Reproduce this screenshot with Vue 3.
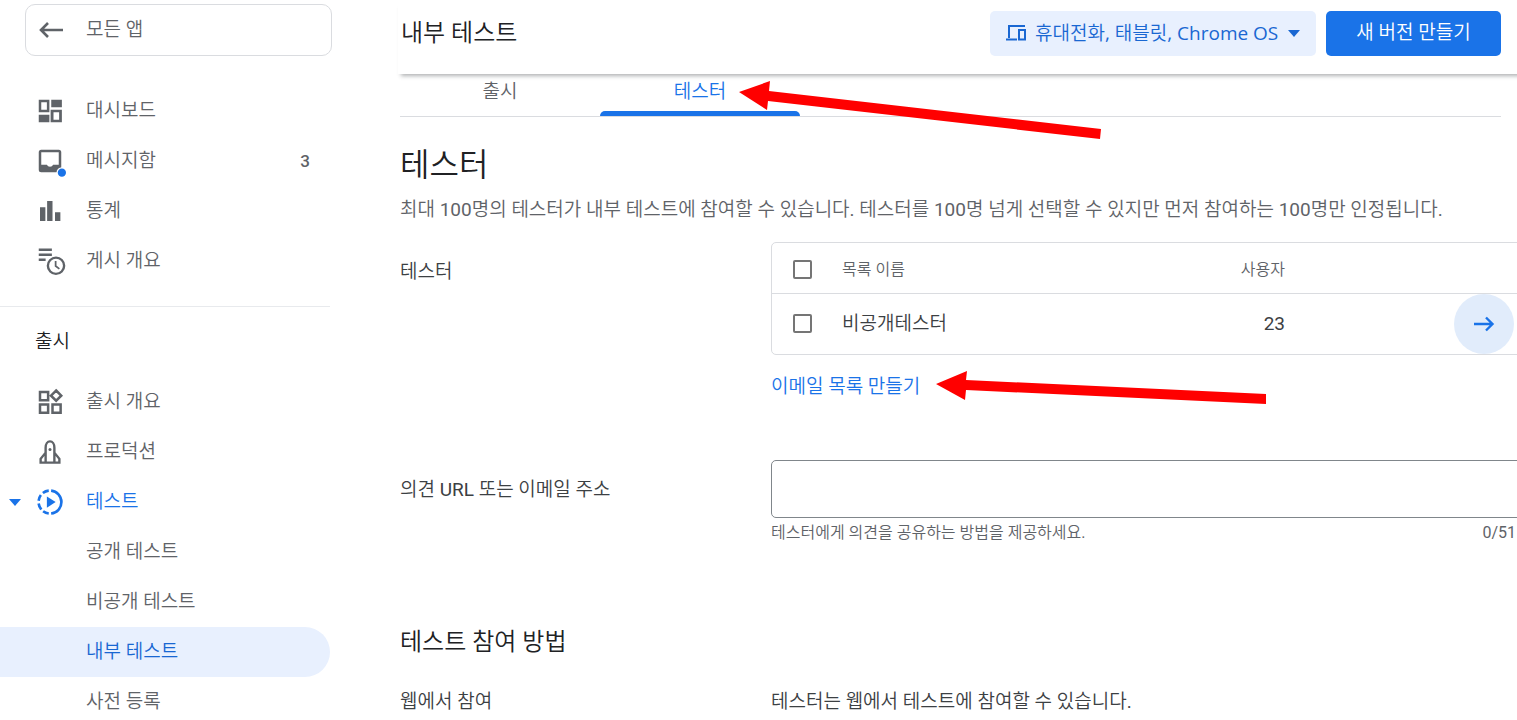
<script setup>
import { ref } from "vue";

const overviewItems = [
  { label: "대시보드", icon: "dashboard" },
  { label: "메시지함", icon: "inbox", count: 3 },
  { label: "통계", icon: "stats" },
  { label: "게시 개요", icon: "publishing" },
]

const releaseItems = [
  { label: "출시 개요", icon: "releases" },
  { label: "프로덕션", icon: "rocket" },
  { label: "테스트", icon: "testing", open: true },
  { label: "공개 테스트" },
  { label: "비공개 테스트" },
  { label: "내부 테스트", active: true },
  { label: "사전 등록" },
]

const groups = [
  { items: overviewItems },
  { title: "출시", items: releaseItems },
]

const tabs = ["출시", "테스터"]
const currentTab = ref("테스터")

const lists = ref([{ id: 1, name: "비공개테스터", users: 23, checked: false }])
const allChecked = ref(false)
const feedback = ref("")

const toggleAll = () => {
  lists.value.forEach((list) => (list.checked = allChecked.value))
}
</script>

<template>
  <div class="page">
    <aside class="sidebar">
      <a href="#" class="back">
        <svg width="30" height="30" viewBox="0 0 30 30">
          <path d="M27 15H5M12 8l-7 7 7 7" fill="none" stroke="currentColor" stroke-width="2.6" />
        </svg>
        <span>모든 앱</span>
      </a>

      <nav v-for="(group, i) in groups" :key="i" class="group">
        <h2 v-if="group.title">{{ group.title }}</h2>
        <a
          v-for="item in group.items"
          :key="item.label"
          href="#"
          class="item"
          :class="{ active: item.active, open: item.open }"
        >
          <span class="caret">
            <svg v-if="item.open" width="12" height="7" viewBox="0 0 12 7"><path d="M0 0h12L6 7z" fill="currentColor" /></svg>
          </span>
          <span class="icon">
            <svg v-if="item.icon" width="30" height="30" viewBox="0 0 24 24" fill="currentColor">
              <path v-if="item.icon === 'dashboard'" fill-rule="evenodd" d="M3 3h8.500v10H3zM5 5v6h4.500V5zM13 3h8.500v6H13zM12.500 11h9v10h-9zM14.800 13v6h4.500v-6zM3 15h8.500v6H3z" />
              <g v-else-if="item.icon === 'inbox'">
                <path fill-rule="evenodd" d="M5 3h14a2 2 0 0 1 2 2v14a2 2 0 0 1-2 2H5a2 2 0 0 1-2-2V5a2 2 0 0 1 2-2zM5 5v10h4.500a2.700 2.700 0 0 0 5 0H19V5z" />
                <circle cx="21.500" cy="21.300" r="4.300" fill="#fff" />
                <circle cx="21.500" cy="21.300" r="3.300" fill="#1a73e8" />
              </g>
              <path v-else-if="item.icon === 'stats'" d="M4 9h4.300v11H4zM9.700 4H14v16H9.700zM16 13h4.300v7H16z" />
              <g v-else-if="item.icon === 'publishing'">
                <path d="M3 2h10.500v2H3zM3 6h10.500v2H3zM3 10h5.500v2H3z" />
                <circle cx="16.800" cy="15.800" r="6.500" fill="#fff" stroke="currentColor" stroke-width="1.900" />
                <path d="M16.500 12v4l3 2.300" fill="none" stroke="currentColor" stroke-width="1.400" />
              </g>
              <g v-else-if="item.icon === 'releases'" fill="none" stroke="currentColor" stroke-width="2">
                <path d="M4 4h6.500v6.500H4zM4 14h6.500v6.500H4zM14 14h6.500v6.500H14zM16.900 2.800l4.100 4.100-4.100 4.100-4.100-4.100z" />
              </g>
              <g v-else-if="item.icon === 'rocket'" fill="none" stroke="currentColor" stroke-width="1.900">
                <path d="M8.500 20.500V8.500C8.500 5.500 10 3.500 12 3.500s3.500 2 3.500 5v12zM8.500 12.500l-4 5v3h4M15.500 12.500l4 5v3h-4M10.500 20.500h3" />
                <circle cx="12" cy="10" r="1.200" fill="currentColor" stroke="none" />
              </g>
              <g v-else>
                <path d="M12.900 2.900a9.200 9.200 0 0 1 0 18.300" fill="none" stroke="currentColor" stroke-width="2.100" />
                <path d="M11 21.200a9.200 9.200 0 0 1-4.500-1.800M5.100 18a9.200 9.200 0 0 1-2.200-4.800M2.900 11a9.200 9.200 0 0 1 1.800-4.600M6.300 4.800A9.200 9.200 0 0 1 11 2.900" fill="none" stroke="currentColor" stroke-width="2.100" />
                <path d="M9.500 7.500v9l7-4.500z" />
              </g>
            </svg>
          </span>
          <span class="label">{{ item.label }}</span>
          <span v-if="item.count" class="count">{{ item.count }}</span>
        </a>
      </nav>
    </aside>

    <main class="main">
      <header class="topbar">
        <h1>내부 테스트</h1>
        <label class="device">
          <svg width="20" height="16" viewBox="0 0 20 16" fill="none" stroke="currentColor" stroke-width="2">
            <path d="M19 1H3v12M0 14.500h11" />
            <path d="M13 5h6v9.500h-6z" />
          </svg>
          <select aria-label="기기">
            <option>휴대전화, 태블릿, Chrome OS</option>
          </select>
          <svg width="12" height="7" viewBox="0 0 12 7"><path d="M0 0h12L6 7z" fill="currentColor" /></svg>
        </label>
        <button class="create">새 버전 만들기</button>
      </header>

      <div class="content">
        <div class="tabs" role="tablist">
          <button
            v-for="tab in tabs"
            :key="tab"
            role="tab"
            :class="{ selected: tab === currentTab }"
            @click="currentTab = tab"
          >{{ tab }}</button>
        </div>

        <h2>테스터</h2>
        <p class="description">최대 100명의 테스터가 내부 테스트에 참여할 수 있습니다. 테스터를 100명 넘게 선택할 수 있지만 먼저 참여하는 100명만 인정됩니다.</p>

        <section class="row testers">
          <span class="row-label">테스터</span>
          <div class="field">
            <div class="card">
              <table>
                <thead>
                  <tr>
                    <th class="check"><input type="checkbox" v-model="allChecked" aria-label="전체 선택" @change="toggleAll" /></th>
                    <th>목록 이름</th>
                    <th class="users">사용자</th>
                    <th class="action"></th>
                  </tr>
                </thead>
                <tbody>
                  <tr v-for="list in lists" :key="list.id">
                    <td class="check"><input type="checkbox" v-model="list.checked" :aria-label="list.name" /></td>
                    <td>{{ list.name }}</td>
                    <td class="users">{{ list.users }}</td>
                    <td class="action">
                      <button class="go" aria-label="목록 열기">
                        <svg width="30" height="30" viewBox="0 0 30 30">
                          <path d="M5 15h19M17 8.500l6.500 6.500-6.500 6.500" fill="none" stroke="currentColor" stroke-width="2.400" />
                        </svg>
                      </button>
                    </td>
                  </tr>
                </tbody>
              </table>
            </div>
            <a href="#" class="create-list">이메일 목록 만들기</a>
          </div>
        </section>

        <section class="row feedback">
          <label class="row-label" for="feedback">의견 URL 또는 이메일 주소</label>
          <div class="field">
            <input id="feedback" v-model="feedback" type="text" />
            <div class="hint">
              <span>테스터에게 의견을 공유하는 방법을 제공하세요.</span>
              <span>0/51</span>
            </div>
          </div>
        </section>

        <h3>테스트 참여 방법</h3>
        <section class="row">
          <span class="row-label">웹에서 참여</span>
          <p>테스터는 웹에서 테스트에 참여할 수 있습니다.</p>
        </section>
      </div>
    </main>

    <!-- red pointers over the tab and the list link -->
    <svg class="pointers" width="1300" height="420" viewBox="0 0 1300 420" fill="#f00">
      <path d="M739 92L770 81L769 91L1101 129L1100 139L768 101L767 110z" />
      <path d="M936 384L967 371L966 380L1266 394V404L966 390L965 400z" />
    </svg>
  </div>
</template>

<style>
body {
  margin: 0;
  background: #fff;
}
</style>

<style scoped>
  .page {
    position: relative;
    display: flex;
    height: 100vh;
    overflow: hidden;
    color: #3c4043;
    font-family: Roboto, "Noto Sans CJK KR DemiLight", "Noto Sans CJK KR", sans-serif;
    font-size: 19px;
    font-weight: 400;
    line-height: 30px;
  }

  .page * {
    box-sizing: border-box;
  }

  h1, h2, h3, p {
    margin: 0;
    font-weight: 400;
  }

  a {
    color: inherit;
    text-decoration: none;
  }

  button, input, select {
    margin: 0;
    font: inherit;
    color: inherit;
  }

  svg {
    display: block;
    flex: none;
  }

  .sidebar {
    flex: none;
    width: 330px;
    color: #5f6368;
  }

  .back {
    display: flex;
    align-items: center;
    gap: 20px;
    height: 52px;
    margin: 4px -2px 30px 25px;
    padding: 0 10px;
    border: 1px solid #dadce0;
    border-radius: 10px;
  }

  .group + .group {
    margin-top: 20px;
    border-top: 1px solid #e8eaed;
  }

  .group h2 {
    padding: 20px 35px;
    color: #202124;
    font-size: 19px;
  }

  .item {
    display: flex;
    align-items: center;
    height: 50px;
    padding-right: 20px;
    border-radius: 0 25px 25px 0;
  }

  .caret {
    display: flex;
    justify-content: center;
    width: 30px;
  }

  .icon {
    display: flex;
    justify-content: center;
    width: 40px;
    margin-right: 16px;
  }

  .icon svg {
    overflow: visible;
  }

  .label {
    flex: 1;
  }

  .count {
    font-size: 17px;
    font-weight: 500;
  }

  .item.open {
    color: #1a73e8;
  }

  .item.active {
    background: #e8f0fe;
    color: #1967d2;
  }

  .main {
    flex: 1;
    min-width: 0;
    margin-left: 68px;
  }

  .topbar {
    position: relative;
    display: flex;
    align-items: center;
    gap: 10px;
    height: 74px;
    margin-right: -8px;
    padding: 0 24px 8px 3px;
    background: #fff;
    box-shadow: 0 5px 4px -3px rgba(60, 64, 67, 0.4);
  }

  h1 {
    flex: 1;
    color: #202124;
    font-size: 24px;
  }

  .device {
    display: flex;
    align-items: center;
    gap: 9px;
    height: 45px;
    padding: 0 16px;
    border-radius: 5px;
    background: #e8f0fe;
    color: #1967d2;
  }

  .device select {
    appearance: none;
    padding: 0;
    border: none;
    background: none;
    font-family: "Open Sans", "Noto Sans CJK KR DemiLight", "Noto Sans CJK KR", sans-serif;
    outline: none;
  }

  .create {
    min-width: 175px;
    height: 45px;
    padding: 0 30px;
    border: none;
    border-radius: 5px;
    background: #1a73e8;
    color: #fff;
  }

  .content {
    padding: 0 16px 0 2px;
  }

  .tabs {
    display: flex;
    height: 43px;
    border-bottom: 1px solid #dadce0;
  }

  .tabs button {
    position: relative;
    width: 200px;
    padding: 0 0 6px;
    border: none;
    background: none;
    color: #5f6368;
  }

  .tabs .selected {
    color: #1a73e8;
  }

  .tabs .selected::after {
    content: "";
    position: absolute;
    inset: auto 0 0;
    height: 5px;
    border-radius: 5px 5px 0 0;
    background: #1a73e8;
  }

  .content h2 {
    margin-top: 28px;
    color: #202124;
    font-size: 32px;
    line-height: 40px;
  }

  .description {
    margin: 10px 0 17px;
    color: #5f6368;
  }

  .row {
    display: grid;
    grid-template-columns: 371px 1fr;
  }

  /* the fields run past the right edge of the window */
  .field {
    margin-right: -40px;
  }

  .testers .row-label {
    padding-top: 15px;
  }

  .card {
    border: 1px solid #dadce0;
    border-radius: 5px;
  }

  table {
    width: 100%;
    border-collapse: collapse;
  }

  th, td {
    height: 60px;
    padding: 0;
    text-align: left;
  }

  th {
    height: 50px;
    padding-top: 4px;
    border-bottom: 1px solid #dadce0;
    color: #5f6368;
    font-size: 16px;
    font-weight: 400;
  }

  .check {
    width: 70px;
    padding-left: 21px;
  }

  .check input {
    display: block;
    appearance: none;
    width: 19px;
    height: 19px;
    border: 2px solid #757575;
    border-radius: 2px;
  }

  .check input:checked {
    border-color: #1a73e8;
    background: #1a73e8;
  }

  .users {
    text-align: right;
  }

  .action {
    width: 255px;
    padding-right: 26px;
  }

  .go {
    display: flex;
    align-items: center;
    justify-content: center;
    width: 60px;
    height: 60px;
    margin-left: auto;
    border: none;
    border-radius: 50%;
    background: #e1ecfb;
    color: #1a73e8;
  }

  .create-list {
    display: inline-block;
    margin-top: 17px;
    color: #1a73e8;
  }

  .feedback {
    margin-top: 58px;
  }

  .feedback .row-label {
    padding-top: 15px;
  }

  .feedback input {
    display: block;
    width: 100%;
    height: 58px;
    padding: 0 20px;
    border: 1px solid #80868b;
    border-radius: 5px;
  }

  .hint {
    display: flex;
    justify-content: space-between;
    padding-right: 25px;
    color: #5f6368;
    font-size: 16px;
  }

  h3 {
    margin: 79px 0 30px;
    color: #202124;
    font-size: 24px;
  }

  .pointers {
    position: absolute;
    top: 0;
    left: 0;
    pointer-events: none;
  }
</style>
